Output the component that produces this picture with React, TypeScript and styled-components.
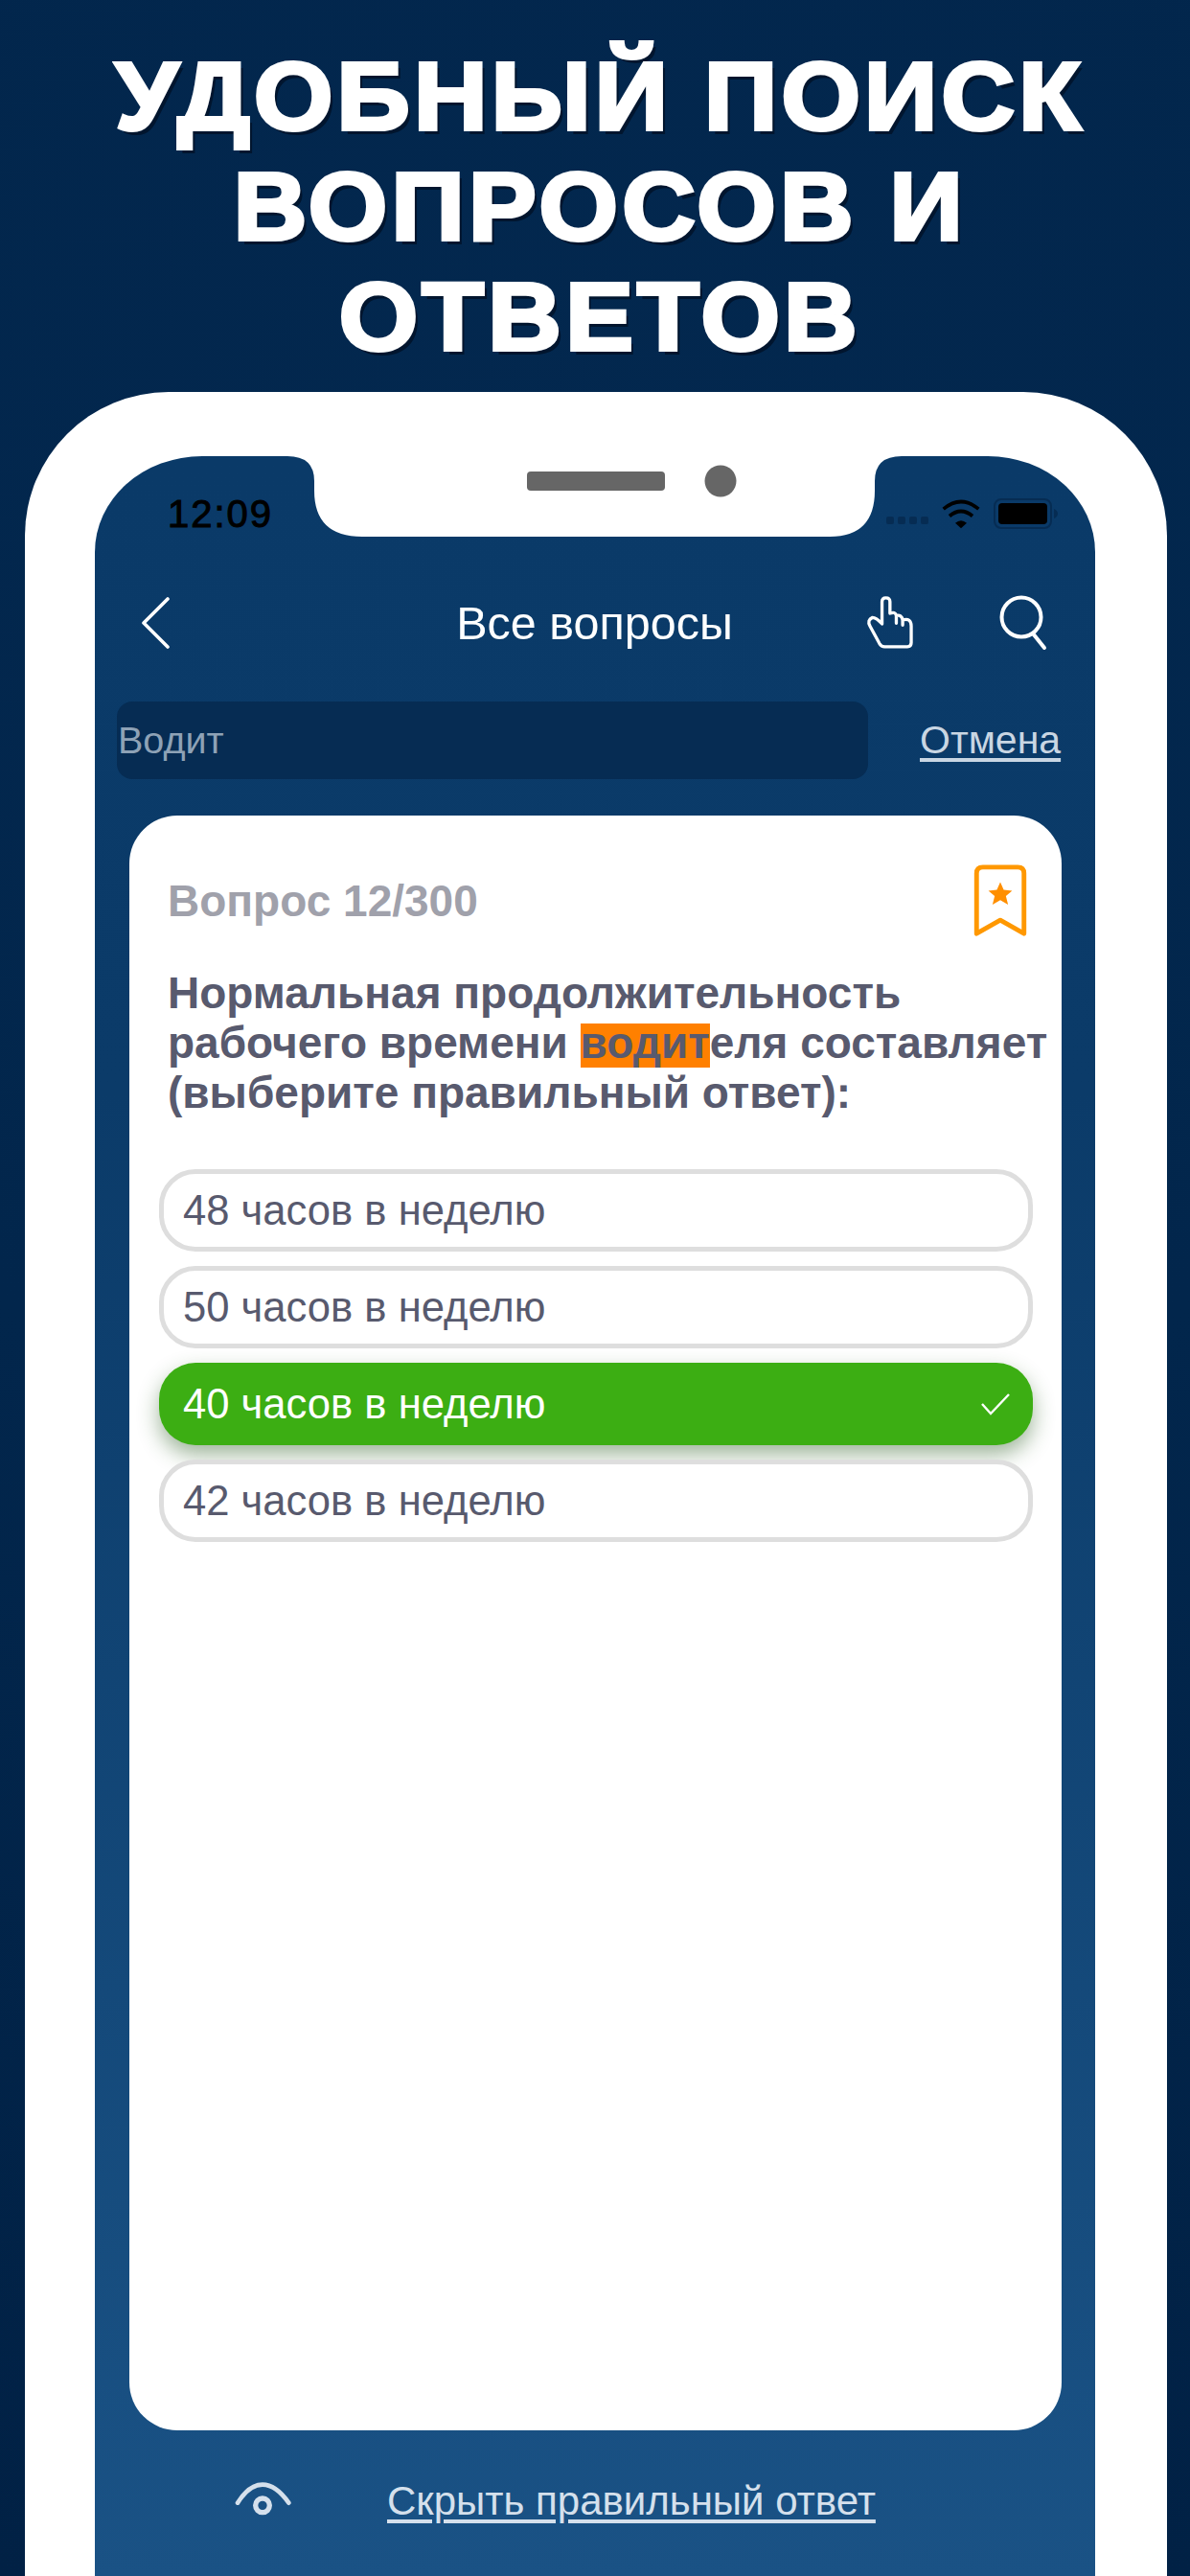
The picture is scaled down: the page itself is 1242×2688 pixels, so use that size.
import React from 'react';
import styled, { createGlobalStyle } from 'styled-components';

const GlobalStyle = createGlobalStyle`
    html, body {
        margin: 0;
        padding: 0;
        background: #012145;
    }
    * {
        box-sizing: border-box;
    }
`;

const Page = styled.div`
    display: flex;
    flex-direction: column;
    width: 1242px;
    height: 2688px;
    overflow: hidden;
    font-family: 'Liberation Sans', Arial, sans-serif;
    background: radial-gradient(circle at 50% 22%, #03284f 0%, #02264c 45%, #012145 100%);
`;

const Headline = styled.h1`
    margin: 43px 0 21px;
    padding-left: 10px;
    font-size: 100px;
    line-height: 115px;
    font-weight: 700;
    letter-spacing: 4px;
    text-align: center;
    color: #fff;
    -webkit-text-stroke: 4px #fff;
    text-shadow: 4px 5px 0 #01152e;
    transform: scaleX(1.06);
`;

const Frame = styled.div`
    flex: 1;
    display: flex;
    margin: 0 24px 0 26px;
    padding: 67px 75px 0 73px;
    background: #fff;
    border-radius: 150px 150px 0 0;
`;

const Screen = styled.div`
    position: relative;
    flex: 1;
    min-width: 0;
    display: flex;
    flex-direction: column;
    background: linear-gradient(180deg, #0a3a68 0%, #0b3b69 30%, #1a5285 100%);
    border-radius: 112px 112px 0 0 / 100px 100px 0 0;
`;

const Notch = styled.svg`
    position: absolute;
    top: 0;
    left: 201px;
`;

const StatusBar = styled.div`
    display: flex;
    align-items: center;
    justify-content: space-between;
    height: 60px;
    margin-top: 30px;
    padding: 0 39px 0 76px;
`;

const Clock = styled.span`
    font-size: 40px;
    font-weight: 400;
    letter-spacing: 2px;
    color: #000;
    -webkit-text-stroke: 1px #000;
`;

const StatusIcons = styled.div`
    display: flex;
    align-items: center;
    gap: 13px;
`;

const SignalDots = styled.div`
    display: flex;
    gap: 4px;
    align-self: flex-end;
    margin-bottom: 5px;
`;

const SignalDot = styled.i`
    display: block;
    width: 8px;
    height: 8px;
    border-radius: 2px;
    background: #062c53;
`;

const NavBar = styled.div`
    display: grid;
    grid-template-columns: 1fr auto 1fr;
    align-items: center;
    height: 100px;
    margin-top: 34px;
    padding: 0 50px 0 49px;
`;

const NavTitle = styled.div`
    font-size: 48.5px;
    color: #fff;
`;

const NavActions = styled.div`
    display: flex;
    align-items: center;
    justify-content: flex-end;
    gap: 86px;
`;

const SearchRow = styled.div`
    display: flex;
    align-items: center;
    height: 81px;
    margin-top: 32px;
    padding-left: 23px;
`;

const SearchField = styled.div`
    display: flex;
    align-items: center;
    width: 784px;
    height: 81px;
    padding-left: 1px;
    border-radius: 16px;
    background: #062c53;
    font-size: 39.5px;
    color: #8ea2b6;
`;

const Cancel = styled.a`
    margin-left: 54px;
    font-size: 41px;
    color: #c9d6e3;
    text-decoration: underline;
    text-underline-offset: 5px;
`;

const Card = styled.div`
    display: flex;
    flex-direction: column;
    height: 1685px;
    margin: 38px 35px 0 36px;
    padding: 0 30px 0 31px;
    background: #fff;
    border-radius: 50px;
`;

const CardHead = styled.div`
    display: flex;
    align-items: center;
    justify-content: space-between;
    height: 76px;
    margin-top: 51px;
    padding: 0 6px 0 9px;
`;

const Counter = styled.div`
    font-size: 46px;
    font-weight: 700;
    color: #a0a1ab;
`;

const Question = styled.div`
    margin-top: 32px;
    padding-left: 9px;
    font-size: 46px;
    line-height: 52px;
    font-weight: 700;
    white-space: nowrap;
    color: #585a6e;
`;

const Highlight = styled.span`
    background: linear-gradient(transparent 6px, #ff8000 6px);
`;

const Options = styled.div`
    display: flex;
    flex-direction: column;
    gap: 15px;
    margin-top: 54px;
`;

const Option = styled.div<{ $correct?: boolean }>`
    display: flex;
    align-items: center;
    justify-content: space-between;
    height: 86px;
    padding: 0 23px 0 ${(p) => (p.$correct ? '25px' : '20px')};
    border: ${(p) => (p.$correct ? 'none' : '5px solid #dedede')};
    border-radius: 38px;
    background: ${(p) => (p.$correct ? '#3cae13' : '#fff')};
    box-shadow: ${(p) => (p.$correct ? '0 10px 22px rgba(40, 90, 30, 0.45)' : 'none')};
    font-size: 43.6px;
    color: ${(p) => (p.$correct ? '#fff' : '#585a6e')};
`;

const Footer = styled.div`
    display: flex;
    align-items: center;
    gap: 100px;
    margin-top: 50px;
    padding-left: 145px;
`;

const FooterLink = styled.a`
    font-size: 42px;
    color: #d5e0ec;
    text-decoration: underline;
    text-underline-offset: 5px;
`;

const options = [
    { label: '48 часов в неделю' },
    { label: '50 часов в неделю' },
    { label: '40 часов в неделю', correct: true },
    { label: '42 часов в неделю' },
];

export default function App() {
    return (
        <Page>
            <GlobalStyle />
            <Headline>
                УДОБНЫЙ ПОИСК
                <br />
                ВОПРОСОВ И
                <br />
                ОТВЕТОВ
            </Headline>
            <Frame>
                <Screen>
                    <Notch width="641" height="84" viewBox="0 0 641 84">
                        <path
                            d="M0 0Q28 0 28 26V36Q28 84 78 84H566Q613 84 613 36V26Q613 0 641 0Z"
                            fill="#fff"
                        />
                        <rect x="250" y="16" width="144" height="20" rx="4" fill="#666" />
                        <circle cx="452" cy="26" r="16.5" fill="#666" />
                    </Notch>

                    <StatusBar>
                        <Clock>12:09</Clock>
                        <StatusIcons>
                            <SignalDots>
                                <SignalDot />
                                <SignalDot />
                                <SignalDot />
                                <SignalDot />
                            </SignalDots>
                            <svg width="42" height="31" viewBox="205 30 126 92" fill="none">
                                <path d="M213 60Q268 14 323 60" stroke="#000" strokeWidth="11" />
                                <path d="M232 82Q268 52 304 82" stroke="#000" strokeWidth="11" />
                                <path d="M250 104Q268 88 286 104L268 120Z" fill="#000" />
                            </svg>
                            <svg width="67" height="32" viewBox="0 0 67 32" fill="none">
                                <rect x="1" y="1" width="59" height="30" rx="7" stroke="#062c53" strokeWidth="2" />
                                <rect x="5" y="5" width="51" height="22" rx="4" fill="#000" />
                                <path d="M63 11Q67 13 67 16Q67 19 63 21Z" fill="#062c53" />
                            </svg>
                        </StatusIcons>
                    </StatusBar>

                    <NavBar>
                        <svg width="30" height="54" viewBox="0 0 30 54" fill="none">
                            <path
                                d="M27 2L2 27L27 52"
                                stroke="#fff"
                                strokeWidth="3.6"
                                strokeLinecap="round"
                                strokeLinejoin="round"
                            />
                        </svg>
                        <NavTitle>Все вопросы</NavTitle>
                        <NavActions>
                            <svg width="53" height="60" viewBox="30 25 160 180" fill="none">
                                <path
                                    d="M80 118V48Q80 36 92 36Q105 36 105 48V85Q122 78 125 92Q142 88 145 106Q172 98 172 125V178Q172 190 160 190H88Q78 190 72 180L42 125Q32 106 50 98Q62 98 80 118ZM125 92V116M145 106V122"
                                    stroke="#fff"
                                    strokeWidth="10"
                                    strokeLinecap="round"
                                    strokeLinejoin="round"
                                />
                            </svg>
                            <svg width="50" height="58" viewBox="0 0 50 58" fill="none">
                                <circle cx="23" cy="23" r="20.5" stroke="#fff" strokeWidth="4" />
                                <path d="M35 40L47 55" stroke="#fff" strokeWidth="4" strokeLinecap="round" />
                            </svg>
                        </NavActions>
                    </NavBar>

                    <SearchRow>
                        <SearchField>Водит</SearchField>
                        <Cancel>Отмена</Cancel>
                    </SearchRow>

                    <Card>
                        <CardHead>
                            <Counter>Вопрос 12/300</Counter>
                            <svg width="56" height="76" viewBox="44 34 172 232" fill="none">
                                <path
                                    d="M54 255V62Q54 42 74 42H186Q206 42 206 62V255L130 212Z"
                                    stroke="#ff9800"
                                    strokeWidth="15"
                                    strokeLinejoin="round"
                                />
                                <path
                                    d="M130 90L141 115L168 118L148 135L155 162L130 148L105 162L112 135L92 118L119 115Z"
                                    fill="#ff8f00"
                                />
                            </svg>
                        </CardHead>
                        <Question>
                            Нормальная продолжительность
                            <br />
                            рабочего времени <Highlight>водит</Highlight>еля составляет
                            <br />
                            (выберите правильный ответ):
                        </Question>
                        <Options>
                            {options.map((option) => (
                                <Option key={option.label} $correct={option.correct}>
                                    {option.label}
                                    {option.correct && (
                                        <svg width="32" height="24" viewBox="0 0 32 24" fill="none">
                                            <path d="M2 12L11 22L30 2" stroke="#fff" strokeWidth="2.4" />
                                        </svg>
                                    )}
                                </Option>
                            ))}
                        </Options>
                    </Card>

                    <Footer>
                        <svg width="60" height="40" viewBox="40 30 180 120" fill="none">
                            <path
                                d="M52 95Q88 38 130 38Q172 38 212 95"
                                stroke="#d5e0ec"
                                strokeWidth="14"
                                strokeLinecap="round"
                            />
                            <circle cx="130" cy="103" r="22" stroke="#d5e0ec" strokeWidth="16" />
                        </svg>
                        <FooterLink>Скрыть правильный ответ</FooterLink>
                    </Footer>
                </Screen>
            </Frame>
        </Page>
    );
}
